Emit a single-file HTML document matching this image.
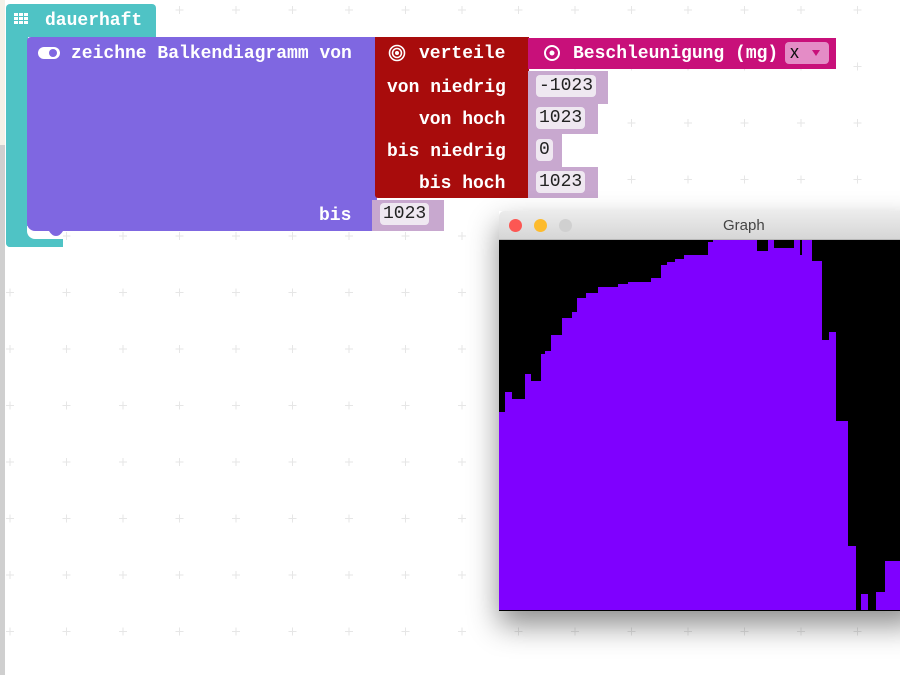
<!DOCTYPE html>
<html><head><meta charset="utf-8"><style>
body{margin:0;width:900px;height:675px;overflow:hidden;position:relative;background:#fff}
.a{position:absolute}
.t{position:absolute;font-family:"Liberation Mono",monospace;font-weight:bold;font-size:18px;color:#fff;line-height:20px;white-space:pre;margin-top:2px}
.v{position:absolute;background:#c8a8cf}
.n{position:absolute;background:#efe8f1;border-radius:4px;font-family:"Liberation Mono",monospace;font-size:18px;color:#222;line-height:22px;padding:0 3px;white-space:pre}
</style></head><body>
<svg class="a" style="left:0;top:0" width="900" height="675">
<defs><pattern id="p" width="56.5" height="56.5" patternUnits="userSpaceOnUse" x="4" y="4">
<path d="M6 2v8M2 6h8" stroke="#e6e6e6" stroke-width="1"/></pattern></defs>
<rect width="900" height="675" fill="url(#p)"/>
<rect x="0" y="0" width="5" height="145" fill="#f4f1e8"/>
<rect x="0" y="145" width="5" height="530" fill="#cfcfcf"/>
</svg>
<div class="a" style="left:6px;top:4px;width:150px;height:33px;background:#4fc3c5;border-radius:4px 4px 0 0"></div>
<div class="a" style="left:6px;top:30px;width:22px;height:217px;background:#4fc3c5;border-radius:0 0 0 4px"></div>
<div class="a" style="left:6px;top:232px;width:57px;height:15px;background:#4fc3c5;border-radius:0 0 0 4px"></div>
<div class="a" style="left:27px;top:226px;width:36px;height:13px;background:#fff;border-radius:0 0 0 8px"></div>
<svg class="a" style="left:14px;top:12px" width="18" height="16"><g fill="#fff"><rect x="0" y="1" width="4" height="3"/><rect x="5" y="1" width="4" height="3"/><rect x="10" y="1" width="4" height="3"/><rect x="0" y="5" width="4" height="3"/><rect x="5" y="5" width="4" height="3"/><rect x="10" y="5" width="4" height="3"/><rect x="0" y="9" width="4" height="3"/><rect x="5" y="9" width="4" height="3"/><rect x="10" y="9" width="4" height="3"/></g></svg>
<div class="t" style="left:45px;top:9px">dauerhaft</div>
<div class="a" style="left:27px;top:37px;width:350px;height:194px;background:#7f67e1;border-radius:4px 0 0 8px"></div>
<svg class="a" style="left:27px;top:225px" width="40" height="16"><path d="M18 6 L22 6 Q25 11 29 11 Q33 11 36 6 Z" fill="#7f67e1"/></svg>
<svg class="a" style="left:38px;top:46px" width="24" height="14"><rect x="0" y="1" width="22" height="12" rx="6" fill="#fff"/><circle cx="15" cy="7" r="4" fill="#7f67e1"/></svg>
<div class="t" style="left:71px;top:42px">zeichne Balkendiagramm von</div>
<div class="t" style="left:319px;top:204px">bis</div>
<div class="v" style="left:372px;top:200px;width:72px;height:31px"></div>
<div class="n" style="left:380px;top:203px">1023</div>
<div class="a" style="left:375px;top:37px;width:154px;height:161px;background:#a80c0c;border-radius:0 0 0 3px"></div>
<svg class="a" style="left:388px;top:44px" width="18" height="18"><g fill="none" stroke="#fff" stroke-width="1.6"><circle cx="9" cy="9" r="7.5"/><circle cx="9" cy="9" r="4.5"/></g><circle cx="9" cy="9" r="2" fill="#fff"/></svg>
<div class="t" style="left:419px;top:42px">verteile</div>
<div class="t" style="left:387px;top:76px">von niedrig</div>
<div class="t" style="left:419px;top:108px">von hoch</div>
<div class="t" style="left:387px;top:140px">bis niedrig</div>
<div class="t" style="left:419px;top:172px">bis hoch</div>
<div class="a" style="left:528px;top:38px;width:308px;height:31px;background:#c8107a"></div>
<svg class="a" style="left:543px;top:44px" width="18" height="18"><circle cx="9" cy="9" r="7" fill="none" stroke="#fff" stroke-width="2"/><circle cx="9" cy="9" r="2.5" fill="#fff"/></svg>
<div class="t" style="left:573px;top:42px">Beschleunigung (mg)</div>
<div class="a" style="left:785px;top:42px;width:44px;height:22px;background:#e48cc6;border-radius:4px"></div>
<div class="a" style="left:790px;top:42px;font-family:'Liberation Sans',sans-serif;font-size:18px;color:#111">x</div>
<svg class="a" style="left:811px;top:49px" width="10" height="8"><path d="M1 1 H9 L5 7 Z" fill="#c8107a"/></svg>
<div class="v" style="left:528px;top:71px;width:80px;height:33px"></div>
<div class="n" style="left:536px;top:75px">-1023</div>
<div class="v" style="left:528px;top:104px;width:70px;height:30px"></div>
<div class="n" style="left:536px;top:107px">1023</div>
<div class="v" style="left:528px;top:134px;width:34px;height:33px"></div>
<div class="n" style="left:536px;top:139px">0</div>
<div class="v" style="left:528px;top:167px;width:70px;height:31px"></div>
<div class="n" style="left:536px;top:171px">1023</div>
<div class="a" style="left:499px;top:211px;width:420px;height:400px;box-shadow:0 14px 28px rgba(0,0,0,0.45)"></div>
<div class="a" style="left:499px;top:211px;width:401px;height:28px;background:linear-gradient(#ececec,#d6d6d6);border-radius:5px 0 0 0;border-bottom:1px solid #b8b8b8"></div>
<div class="a" style="left:509px;top:219px;width:13px;height:13px;border-radius:50%;background:#fc5753"></div>
<div class="a" style="left:534px;top:219px;width:13px;height:13px;border-radius:50%;background:#fdbb2d"></div>
<div class="a" style="left:559px;top:219px;width:13px;height:13px;border-radius:50%;background:#d0d0d0"></div>
<div class="a" style="left:723px;top:217px;font-family:'Liberation Sans',sans-serif;font-size:15px;color:#444">Graph</div>
<svg class="a" style="left:499px;top:240px" width="401" height="371">
<rect width="401" height="371" fill="#000"/>
<g transform="translate(-499,-240)">
<polygon fill="#7f00ff" points="499,610 499,412 505,412 505,392 512,392 512,399 525,399 525,374 531,374 531,381 541,381 541,354 545,354 545,351 551,351 551,335 562,335 562,318 572,318 572,312 577,312 577,298 586,298 586,293 598,293 598,287 618,287 618,284 628,284 628,282 651,282 651,278 661,278 661,265 667,265 667,262 675,262 675,259 684,259 684,255 708,255 708,242 713,242 713,239 757,239 757,251 768,251 768,239 774,239 774,248 794,248 794,239 800,239 800,255 802,255 802,239 812,239 812,261 822,261 822,340 829,340 829,332 836,332 836,421 848,421 848,546 856,546 856,610 861,610 861,594 868,594 868,610 876,610 876,592 885,592 885,561 900,561 900,610"/>
</g></svg>
</body></html>
